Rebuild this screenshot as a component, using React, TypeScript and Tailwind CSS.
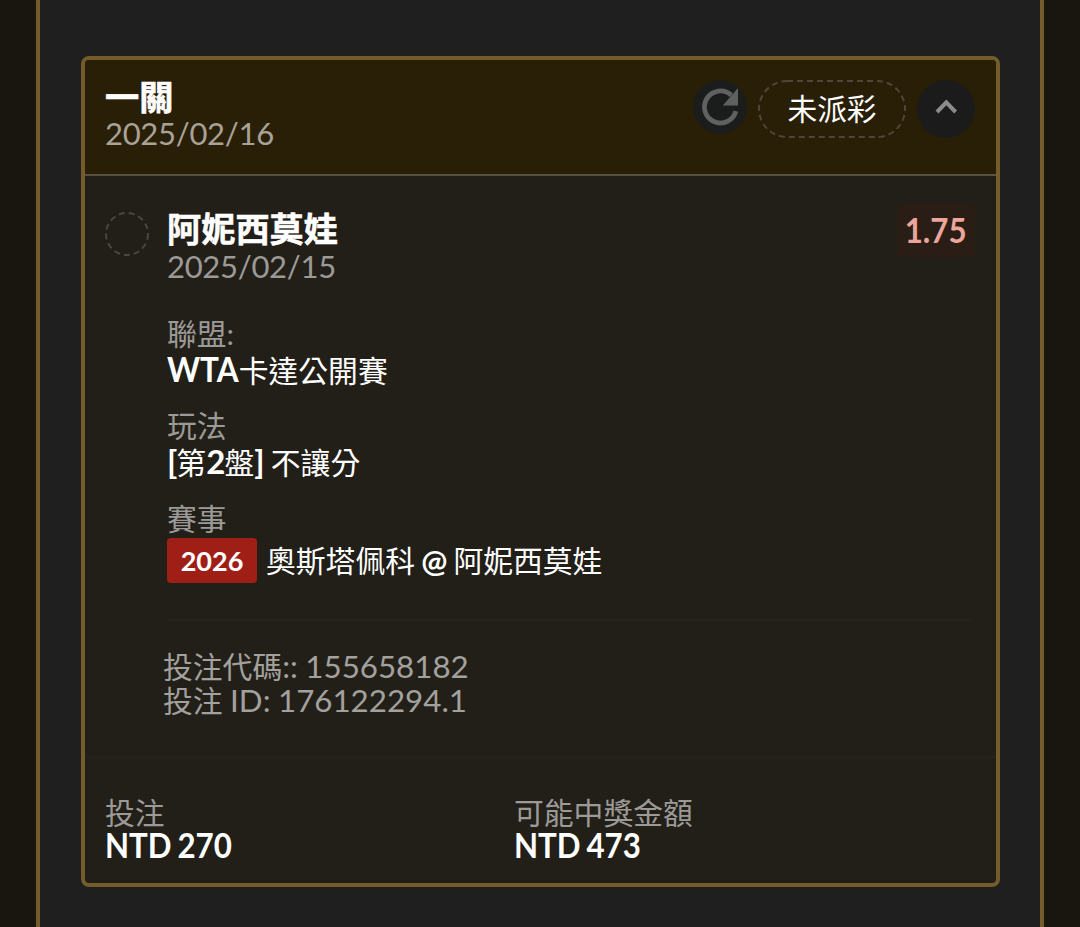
import React from 'react';

type BetDetail = {
  label: string;
  content: React.ReactNode;
};

const details: BetDetail[] = [
  {
    label: '聯盟:',
    content: (
      <>
        <span className="-mr-[4.5px] inline-block origin-left scale-x-[0.94] text-[33.5px] font-bold leading-[36px]">
          WTA
        </span>
        卡達公開賽
      </>
    ),
  },
  {
    label: '玩法',
    content: (
      <>
        <span className="text-[33px] font-bold tracking-[-1px]">[</span>第
        <span className="text-[33px] font-bold tracking-[-0.8px]">2</span>盤
        <span className="text-[33px] font-bold">]</span> 不讓分
      </>
    ),
  },
];

function RefreshIcon() {
  return (
    <svg viewBox="0 0 54 54" className="h-[54px] w-[54px]" fill="none">
      <path d="M42.9 31.2 A16 16 0 1 1 38.3 15.2" stroke="#606060" strokeWidth="4.8" />
      <path d="M45 8 V25.5 H29.8 Z" fill="#606060" />
    </svg>
  );
}

function BetHeader() {
  return (
    <div className="flex h-[116px] justify-between border-b-2 border-[#585041] bg-[#291e06] pl-5 pr-[21px] pt-[19px]">
      <div>
        <h2 className="h-[36px] text-[34.2px] font-bold leading-[36px] text-white [-webkit-text-stroke:0.7px]">一關</h2>
        <p className="h-[36px] text-[31px] leading-[36px] tracking-[-0.3px] text-[#a8a297]">2025/02/16</p>
      </div>
      <div className="flex items-start pt-px">
        <button className="mr-[11px] h-[54px] w-[54px] rounded-full bg-[#1b1c1c]" aria-label="重新整理">
          <RefreshIcon />
        </button>
        <div className="mr-[11px] flex h-[58px] w-[148px] items-center justify-center">
          <svg viewBox="0 0 148 58" className="absolute h-[58px] w-[148px]" fill="none">
            <rect x="1" y="1" width="146" height="56" rx="28" stroke="#4f463a" strokeWidth="2" strokeDasharray="6 4" />
          </svg>
          <span className="text-[29.7px] leading-[56px] text-white">未派彩</span>
        </div>
        <button className="h-[58px] w-[58px] rounded-full bg-[#1b1b1b]" aria-label="收合">
          <svg viewBox="0 0 58 58" className="h-[58px] w-[58px]" fill="none">
            <path d="M20 32 L29.3 22.3 L38.6 32" stroke="#8b8b8b" strokeWidth="4" />
          </svg>
        </button>
      </div>
    </div>
  );
}

export default function App() {
  return (
    <div className="flex h-[927px] w-[1080px] overflow-hidden bg-[#19160f] px-9 font-['Lato','Noto_Sans_CJK_TC',sans-serif]">
      <div className="w-full border-x-4 border-[#745c2b] bg-[#1f1f1f] pl-[41px] pr-10 pt-14">
        <div className="h-[831px] overflow-hidden rounded-[8px] border-4 border-[#745c2b] bg-[#221f19]">
          <BetHeader />

          <div className="flex h-[580px] pl-5 pr-[21px] pt-[26px]">
            <svg viewBox="0 0 44 44" className="mr-[18px] mt-[10px] h-11 w-11 shrink-0" fill="none">
              <circle cx="22" cy="22" r="21" stroke="#4a4741" strokeWidth="2" strokeDasharray="6 4" />
            </svg>
            <div className="flex-1">
              <div className="flex justify-between">
                <div>
                  <h3 className="h-[45px] text-[34.2px] font-bold leading-[54px] text-white [-webkit-text-stroke:0.5px]">
                    阿妮西莫娃
                  </h3>
                  <p className="h-[39px] text-[31px] leading-[38px] tracking-[-0.3px] text-[#9c9a96]">2025/02/15</p>
                </div>
                <div className="mt-px h-[54px] w-[78px] rounded-[4px] bg-[#291d15] text-center">
                  <span className="inline-block scale-x-[0.92] text-[34px] font-bold leading-[54px] text-[#eba59b]">
                    1.75
                  </span>
                </div>
              </div>

              <div className="mt-[28px] text-[29.8px] [word-spacing:-1.5px]">
                {details.map((item) => (
                  <div key={item.label} className="h-[92px]">
                    <p className="h-[37px] leading-[40px] text-[#9c9a96]">{item.label}</p>
                    <p className="h-[36px] whitespace-nowrap leading-[36px] text-white">{item.content}</p>
                  </div>
                ))}
                <p className="h-[40px] leading-[41px] text-[#9c9a96]">賽事</p>
                <div className="flex h-[45px] items-center text-white">
                  <span className="mr-[9px] h-[45px] w-[90px] rounded-[4px] bg-[#9f1f16] text-center text-[27px] font-bold leading-[46px]">
                    2026
                  </span>
                  <span className="leading-[45px]">
                    奧斯塔佩科 <span className="text-[31px] font-bold">@</span> 阿妮西莫娃
                  </span>
                </div>
              </div>

              <div className="mr-[3px] mt-[36px] h-[2px] bg-[#26231e]" />

              <div className="-ml-1 mt-[28px] text-[31.3px] leading-[34px] text-[#a3a19d] [word-spacing:-0.5px]">
                <p className="h-[34px]">
                  <span className="text-[29.8px] leading-none">投注代碼</span>:: 155658182
                </p>
                <p className="h-[34px]">
                  <span className="text-[29.8px] leading-none">投注</span> ID: 176122294.1
                </p>
              </div>
            </div>
          </div>

          <div className="grid h-[127px] grid-cols-[409px_1fr] border-t-2 border-[#25231c] pl-5 pt-[37px]">
            <div>
              <p className="h-[33px] text-[29.8px] leading-[36px] text-[#9c9a96]">投注</p>
              <p className="h-[34px] origin-left scale-x-[0.92] text-[34px] font-bold leading-[34px] text-white [word-spacing:-2px]">
                NTD 270
              </p>
            </div>
            <div>
              <p className="h-[33px] text-[29.8px] leading-[36px] text-[#9c9a96]">可能中獎金額</p>
              <p className="h-[34px] origin-left scale-x-[0.92] text-[34px] font-bold leading-[34px] text-white [word-spacing:-2px]">
                NTD 473
              </p>
            </div>
          </div>
        </div>
      </div>
    </div>
  );
}
